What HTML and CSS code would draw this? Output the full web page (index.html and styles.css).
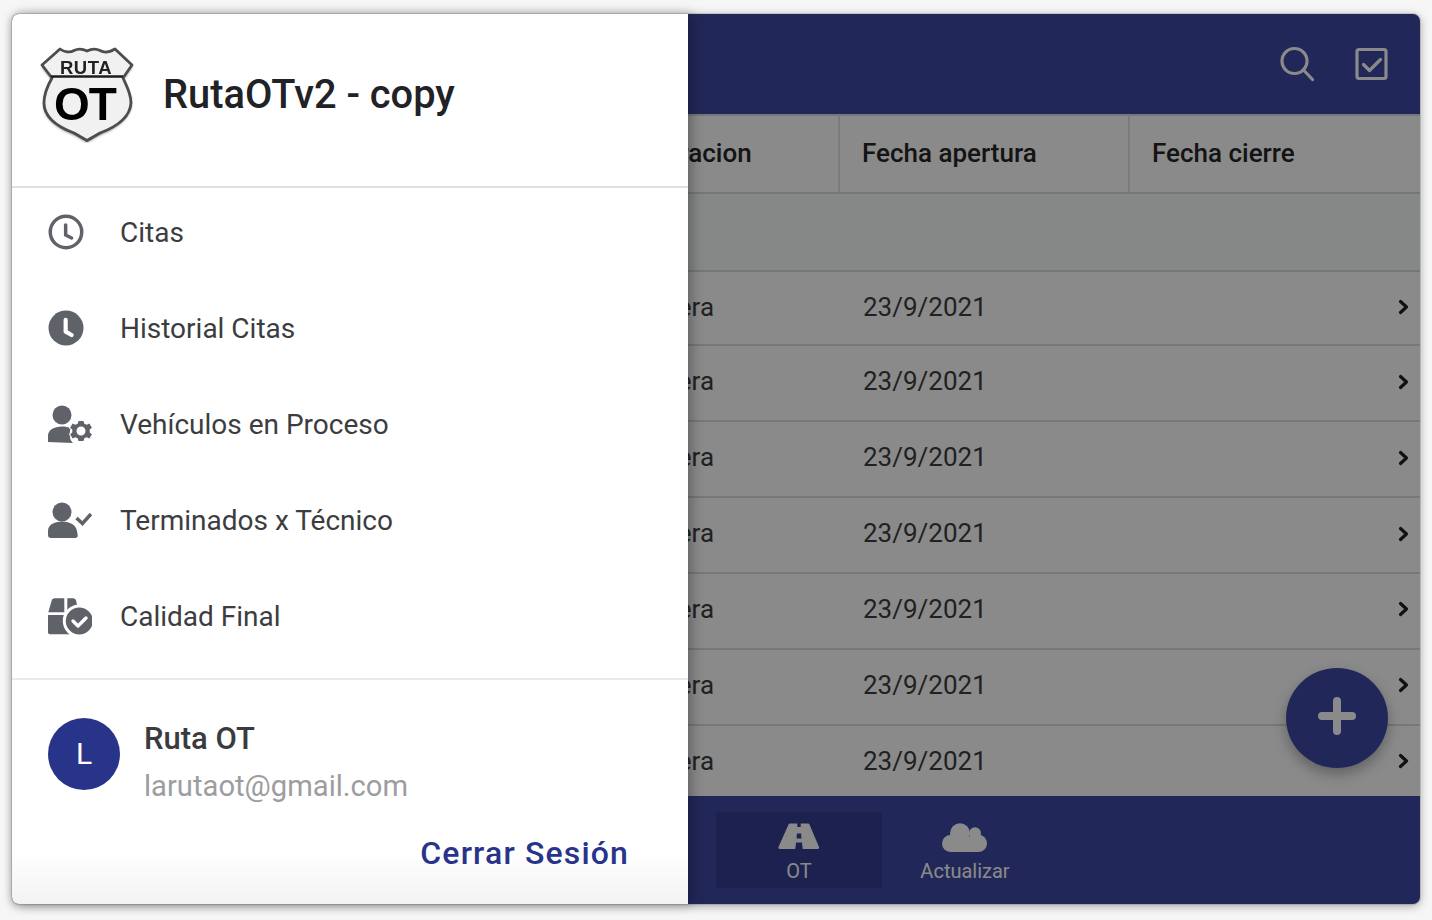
FILE: index.html
```html
<!DOCTYPE html>
<html lang="es">
<head>
<meta charset="utf-8">
<title>RutaOTv2 - copy</title>
<link rel="stylesheet" href="styles.css">
</head>
<body>
<div class="window">
  <main class="app">
    <header class="topbar">
      <svg class="top-icon" viewBox="0 0 38 38"><circle cx="15.500" cy="15" r="12.500"/><path d="M24.500 24l9 9.500"/></svg>
      <svg class="top-icon" viewBox="0 0 38 38"><rect x="4" y="3.500" width="29" height="29" rx="2"/><path d="M10.500 18.500l6 6 11-11"/></svg>
    </header>
    <div class="thead">
      <div class="th">Operacion</div>
      <div class="th th-line">Fecha apertura</div>
      <div class="th th-line">Fecha cierre</div>
    </div>
    <div class="filter-row"></div>
    <div class="rows">
      <div class="row"><span>Espera</span><span class="date">23/9/2021</span><span class="go"><svg class="chev" viewBox="0 0 12 16"><path d="M2.500 2.500l6 5.500-6 5.500"/></svg></span></div>
      <div class="row"><span>Espera</span><span class="date">23/9/2021</span><span class="go"><svg class="chev" viewBox="0 0 12 16"><path d="M2.500 2.500l6 5.500-6 5.500"/></svg></span></div>
      <div class="row"><span>Espera</span><span class="date">23/9/2021</span><span class="go"><svg class="chev" viewBox="0 0 12 16"><path d="M2.500 2.500l6 5.500-6 5.500"/></svg></span></div>
      <div class="row"><span>Espera</span><span class="date">23/9/2021</span><span class="go"><svg class="chev" viewBox="0 0 12 16"><path d="M2.500 2.500l6 5.500-6 5.500"/></svg></span></div>
      <div class="row"><span>Espera</span><span class="date">23/9/2021</span><span class="go"><svg class="chev" viewBox="0 0 12 16"><path d="M2.500 2.500l6 5.500-6 5.500"/></svg></span></div>
      <div class="row"><span>Espera</span><span class="date">23/9/2021</span><span class="go"><svg class="chev" viewBox="0 0 12 16"><path d="M2.500 2.500l6 5.500-6 5.500"/></svg></span></div>
      <div class="row"><span>Espera</span><span class="date">23/9/2021</span><span class="go"><svg class="chev" viewBox="0 0 12 16"><path d="M2.500 2.500l6 5.500-6 5.500"/></svg></span></div>
    </div>
    <nav class="tabs">
      <div class="tab tab-on">
        <svg class="road" viewBox="0 0 42 28"><path d="M12 .5H19.300V4H22.700V.5H30c.8 0 1.300.4 1.500 1L41 24c.5 1.200-.2 2-1.500 2H24.700L24 19.500H18L17.300 26H2c-1.300 0-2-.8-1.500-2L10.500 1.500c.2-.6.7-1 1.500-1zM18.900 10.500L18.600 15.500H23.400L23.100 10.500z"/></svg>
        <span>OT</span>
      </div>
      <div class="tab">
        <svg class="cloud" viewBox="0 0 46 32"><circle cx="18" cy="10.300" r="10"/><circle cx="33" cy="10.300" r="6"/><circle cx="8.500" cy="20.500" r="8.500"/><circle cx="36.300" cy="20.300" r="8.700"/><rect x="8" y="14" width="28" height="15"/></svg>
        <span>Actualizar</span>
      </div>
    </nav>
    <button class="fab" type="button" aria-label="Agregar"><svg viewBox="0 0 38 38"><path d="M19 4v30M4 19h30"/></svg></button>
  </main>
  <div class="scrim"></div>
  <aside class="drawer">
    <div class="brand">
      <svg class="logo" viewBox="0 0 96 96">
        <path class="logo-shadow" d="M20 2C24 5 30 6 34 3.500 38 1.500 42 1.500 47 4 52 1.500 56 1.500 60 3.500 64 6 70 5 75 2L92 18 83 31C86 38 91 46 91 56 90 70 76 80 60 86L47 93.500 34 86C18 80 4 70 4 56 4 46 8 38 12 31L2 18z"/>
        <path class="logo-plate" d="M20 2C24 5 30 6 34 3.500 38 1.500 42 1.500 47 4 52 1.500 56 1.500 60 3.500 64 6 70 5 75 2L92 18 83 31C86 38 91 46 91 56 90 70 76 80 60 86L47 93.500 34 86C18 80 4 70 4 56 4 46 8 38 12 31L2 18z"/>
        <path class="logo-line" d="M11 29.500h72"/>
        <text class="logo-small" x="46" y="27" text-anchor="middle">RUTA</text>
        <text class="logo-big" x="45" y="72.500" text-anchor="middle">OT</text>
      </svg>
      <h1 class="title">RutaOTv2 - copy</h1>
    </div>
    <ul class="menu">
      <li class="item"><svg class="ico" viewBox="0 0 24 24"><circle class="ring" cx="12" cy="12" r="9"/><path class="hand" d="M11.800 8v5.700l3.400 1.700"/></svg><span>Citas</span></li>
      <li class="item"><svg class="ico" viewBox="0 0 24 24"><circle cx="12" cy="12" r="10"/><path class="hand-white" d="M11.800 7.400v6.700l3.400 1.900"/></svg><span>Historial Citas</span></li>
      <li class="item"><svg class="ico-wide" viewBox="0 0 46 40"><circle cx="16" cy="11" r="9.500"/><path d="M2 38v-6c0-6 6-9.500 14-9.500 3.500 0 6.500.6 9 1.700-1.500 2.300-1.500 5-.5 8l-.5 1.600c.5 2.300 1.500 3.800 3 5.200z"/><path class="gear" fill-rule="evenodd" d="M32.500 17h5l.8 2.800 2.500 1 2.600-1.400 2.500 4.300-2.200 1.900v2.800l2.200 1.900-2.500 4.300-2.600-1.400-2.500 1-.8 2.800h-5l-.8-2.800-2.500-1-2.600 1.400-2.500-4.300 2.200-1.900v-2.800l-2.200-1.900 2.500-4.300 2.600 1.400 2.500-1zM35 22.500a4.500 4.500 0 1 0 0 9 4.500 4.500 0 0 0 0-9z"/></svg><span>Vehículos en Proceso</span></li>
      <li class="item"><svg class="ico-wide" viewBox="0 0 46 40"><circle cx="16" cy="12" r="9.500"/><path d="M2 35v-4c0-6 6-9.500 14-9.500S30 25 31 31l.7 4c.3 2-.7 3-2.700 3H5c-2 0-3-1-3-3z"/><path class="tick" d="M30.500 18l6 5.500 8.500-9.500"/></svg><span>Terminados x Técnico</span></li>
      <li class="item"><svg class="ico-wide" viewBox="0 0 46 40"><path d="M8 2.300H18.300V16.300H2.300L6 3.500zM21.300 2.300H27c1.500 0 2.500.8 3 2l1.500 6.500C27 11 23 13 21.300 16zM2 19H30V38.300H4c-1.300 0-2-.8-2-2z"/><circle class="badge" cx="33.300" cy="25" r="15"/><path class="badge-tick" d="M27 25l5 5 8-8"/></svg><span>Calidad Final</span></li>
    </ul>
    <div class="account">
      <div class="user">
        <div class="avatar">L</div>
        <div class="who">
          <div class="name">Ruta OT</div>
          <div class="mail">larutaot@gmail.com</div>
        </div>
      </div>
      <a class="logout">Cerrar Sesión</a>
    </div>
  </aside>
</div>
</body>
</html>
```
FILE: styles.css
```css
* { box-sizing: border-box; }
html, body { margin: 0; height: 100%; }
body {
  background: #f6f6f6;
  padding: 14px 12px 16px;
  font-family: Roboto, "Liberation Sans", sans-serif;
  overflow: hidden;
}
.window {
  position: relative;
  height: 890px;
  border-radius: 7px;
  box-shadow: 0 0 0 1px rgba(0,0,0,.12), 0 2px 10px rgba(0,0,0,.35);
}
.app, .scrim, .drawer { border-radius: 7px; }
.app {
  height: 100%;
  display: flex;
  flex-direction: column;
  background: #fff;
  overflow: hidden;
  position: relative;
}
.topbar {
  flex: 0 0 100px;
  background: #3d4aa5;
  display: flex;
  justify-content: flex-end;
  align-items: center;
  gap: 36px;
  padding: 2px 29px 0 0;
}
.top-icon {
  width: 38px;
  height: 38px;
  fill: none;
  stroke: #fff;
  stroke-width: 3.200;
  stroke-linecap: round;
  stroke-linejoin: round;
}
.thead {
  flex: 0 0 80px;
  display: grid;
  grid-template-columns: 226px 290px 292px;
  padding-left: 600px;
  border-top: 2px solid #dcdcdc;
  border-bottom: 2px solid #dcdcdc;
  background: #fff;
}
.th {
  display: flex;
  align-items: center;
  padding: 0 0 2px 21px;
  font-size: 26px;
  font-weight: 500;
  color: #262626;
}
.th-line { border-left: 2px solid #e4e4e4; padding-left: 22px; }
.filter-row { flex: 0 0 76px; background: #f7fbf9; }
.rows { flex: 1; overflow: hidden; }
.row {
  height: 76px;
  display: grid;
  grid-template-columns: 226px 291px 291px;
  padding-left: 600px;
  align-items: start;
  border-top: 2px solid #dcdcdc;
  font-size: 26px;
  line-height: 70px;
  color: #3e3e3e;
  background: #fff;
}
.row:first-child { height: 74px; }
.row > span:first-child { padding-left: 23px; }
.date { padding-left: 25px; }
.go { display: flex; justify-content: flex-end; padding: 27px 10px 0 0; }
.row:nth-child(n+2):nth-child(-n+4) .go { padding-top: 28px; }
.chev {
  width: 12px;
  height: 16px;
  fill: none;
  stroke: #202020;
  stroke-width: 3.200;
  stroke-linecap: round;
  stroke-linejoin: round;
}
.tabs {
  flex: 0 0 108px;
  background: #3d4aa5;
  display: flex;
  padding: 16px 0 0 704px;
}
.tab {
  width: 166px;
  height: 76px;
  display: flex;
  flex-direction: column;
  align-items: center;
  justify-content: space-between;
  padding: 11px 0 5px;
  font-size: 20px;
  color: #fff;
}
.tab-on { background: #343d94; }
.road { width: 42px; height: 28px; fill: #fff; fill-rule: evenodd; }
.cloud { width: 46px; height: 32px; fill: #fff; }
.fab {
  position: absolute;
  left: 1274px;
  top: 654px;
  width: 102px;
  height: 100px;
  border: 0;
  border-radius: 50%;
  background: #3d4aa5;
  padding: 0;
  display: flex;
  align-items: center;
  justify-content: center;
  box-shadow: 0 6px 14px rgba(0,0,0,.3);
}
.fab svg {
  width: 38px;
  height: 38px;
  margin-top: -5px;
  fill: none;
  stroke: #fff;
  stroke-width: 8;
  stroke-linecap: round;
}
.scrim {
  position: absolute;
  inset: 0;
  background: rgba(0,0,0,.46);
}
.drawer {
  position: absolute;
  left: 0;
  top: 0;
  bottom: 0;
  width: 676px;
  display: flex;
  flex-direction: column;
  background: linear-gradient(to bottom, #fff 94%, #f3f3f4 100%);
  border-radius: 7px 0 0 7px;
  box-shadow: 4px 0 12px rgba(0,0,0,.28);
}
.brand {
  flex: 0 0 174px;
  display: flex;
  align-items: flex-start;
  padding: 33px 0 0 28px;
  border-bottom: 2px solid #dedfe1;
}
.logo { width: 96px; height: 96px; flex: none; filter: blur(.5px); }
.logo-shadow { fill: #555; filter: blur(1.500px); transform: translateY(1.500px); }
.logo-plate { fill: #f1f1f1; stroke: #4d4d4d; stroke-width: 2.800; stroke-linejoin: round; }
.logo-line { stroke: #1c1c1c; stroke-width: 2.400; }
.logo-small { font: 700 18.500px "Liberation Sans", sans-serif; letter-spacing: .5px; fill: #222; }
.logo-big { font: 700 46px "Liberation Sans", sans-serif; letter-spacing: -1px; fill: #000; }
.title {
  margin: 26px 0 0 27px;
  font-size: 39.800px;
  line-height: 44px;
  font-weight: 500;
  color: #212226;
}
.menu {
  list-style: none;
  margin: -4px 0 0;
  padding: 0 0 14px;
  border-bottom: 2px solid #e9eaeb;
}
.item {
  height: 96px;
  display: flex;
  align-items: center;
  padding-left: 33px;
  gap: 33px;
  font-size: 28px;
  color: #3c3d41;
}
.ico { width: 42px; height: 42px; fill: #5f6268; flex: none; }
.ring { fill: none; stroke: #5f6268; stroke-width: 2; }
.hand { fill: none; stroke: #5f6268; stroke-width: 2; stroke-linecap: round; stroke-linejoin: round; }
.hand-white { fill: none; stroke: #fff; stroke-width: 2.400; stroke-linecap: round; stroke-linejoin: round; }
.ico-wide { width: 46px; height: 40px; margin-left: 1px; margin-right: -5px; fill: #5f6268; flex: none; }
.gear { stroke: #fff; stroke-width: 2; paint-order: stroke; }
.tick { fill: none; stroke: #5f6268; stroke-width: 3.400; }
.badge { stroke: #fff; stroke-width: 3; }
.badge-tick { fill: none; stroke: #fff; stroke-width: 3.400; stroke-linecap: round; stroke-linejoin: round; }
.account { flex: 1; display: flex; flex-direction: column; padding: 38px 59px 0 36px; }
.user { display: flex; gap: 24px; }
.avatar {
  width: 72px;
  height: 72px;
  border-radius: 50%;
  background: #28348a;
  color: #fff;
  font-size: 30px;
  padding-bottom: 2px;
  display: flex;
  align-items: center;
  justify-content: center;
  flex: none;
}
.who { display: flex; flex-direction: column; }
.name { font-size: 31px; font-weight: 500; line-height: 42px; color: #3a3b3e; }
.mail { font-size: 29.200px; line-height: 52px; color: #9c9da1; }
.logout {
  align-self: flex-end;
  margin-top: 21px;
  font-size: 32px;
  line-height: 40px;
  font-weight: 500;
  letter-spacing: 1.150px;
  color: #28348a;
}
```
